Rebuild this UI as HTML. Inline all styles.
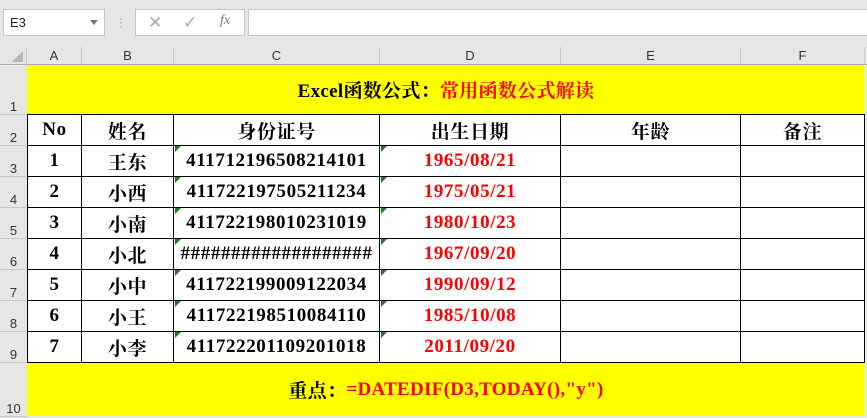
<!DOCTYPE html>
<html><head><meta charset="utf-8"><style>
*{margin:0;padding:0;box-sizing:border-box}
body{width:867px;height:418px;overflow:hidden;background:#e6e6e6;position:relative;font-family:"Liberation Serif","Noto Serif CJK SC",serif}
.a{position:absolute}
.box{background:#fff;border:1px solid #c6c6c6}
.ch{font-family:"Liberation Sans",sans-serif;font-size:13px;color:#333;text-align:center;line-height:18px;top:47px;height:18px;border-right:1px solid #c8c8c8}
.rh{font-family:"Liberation Sans",sans-serif;font-size:13px;color:#333;left:0;width:27px;text-align:center;border-bottom:1px solid #c8c8c8;display:flex;align-items:flex-end;justify-content:center;padding-bottom:0}
.c{display:flex;align-items:center;justify-content:center;font-weight:bold;font-size:19px;color:#000;background:#fff;border-right:1px solid #000;border-bottom:1px solid #000;letter-spacing:0.6px}
.r{color:#f00}
.tri{position:absolute;left:1px;top:0;width:0;height:0;border-top:6px solid #1e7b1e;border-right:6px solid transparent}
</style></head><body>
<div class="a box" style="left:3px;top:9px;width:102px;height:27px;font-family:'Liberation Sans',sans-serif;font-size:13px;line-height:25px;padding-left:6px;color:#222">E3</div>
<div class="a" style="left:90px;top:20px;border-top:5px solid #777;border-left:4px solid transparent;border-right:4px solid transparent"></div>
<div class="a" style="left:119px;top:16px;color:#999;font-size:12px;line-height:4px;font-family:'Liberation Sans',sans-serif">·<br>·<br>·</div>
<div class="a box" style="left:135px;top:9px;width:110px;height:27px;color:#aaa;font-family:'Liberation Sans',sans-serif">
<span class="a" style="left:12px;top:3px;font-size:17px">✕</span>
<span class="a" style="left:47px;top:3px;font-size:17px">✓</span>
<span class="a" style="left:84px;top:3px;font-size:14px;font-style:italic;font-family:'Liberation Serif',serif;color:#777">fx</span></div>
<div class="a box" style="left:248px;top:9px;width:625px;height:27px"></div>
<div class="a" style="left:0;top:47px;width:27px;height:18px;border-right:1px solid #c8c8c8"></div>
<div class="a" style="left:12px;top:51px;border-bottom:11px solid #b5b5b5;border-left:11px solid transparent"></div>
<div class="a ch" style="left:27px;width:55px">A</div>
<div class="a ch" style="left:82px;width:92px">B</div>
<div class="a ch" style="left:174px;width:206px">C</div>
<div class="a ch" style="left:380px;width:181px">D</div>
<div class="a ch" style="left:561px;width:180px">E</div>
<div class="a ch" style="left:741px;width:124px">F</div>
<div class="a" style="left:0;top:64px;width:867px;height:1px;background:#ababab"></div>
<div class="a rh" style="top:65px;height:50px">1</div>
<div class="a rh" style="top:115px;height:31px">2</div>
<div class="a rh" style="top:146px;height:31px">3</div>
<div class="a rh" style="top:177px;height:31px">4</div>
<div class="a rh" style="top:208px;height:31px">5</div>
<div class="a rh" style="top:239px;height:31px">6</div>
<div class="a rh" style="top:270px;height:31px">7</div>
<div class="a rh" style="top:301px;height:31px">8</div>
<div class="a rh" style="top:332px;height:31px">9</div>
<div class="a rh" style="top:363px;height:54px">10</div>
<div class="a" style="left:27px;top:65px;width:838px;height:50px;background:#ff0;border-bottom:1px solid #000;display:flex;align-items:center;justify-content:center;font-weight:bold;font-size:19px;letter-spacing:0.3px">Excel函数公式：<span class="r">常用函数公式解读</span></div>
<div class="a" style="left:27px;top:363px;width:838px;height:53px;background:#ff0;display:flex;align-items:center;justify-content:center;font-weight:bold;font-size:19px;letter-spacing:0.3px">重点：<span class="r">=DATEDIF(D3,TODAY(),"y")</span></div>
<div id="g"></div>
<script>
var cols=[[27,55],[82,92],[174,206],[380,181],[561,180],[741,124]];
var rows=[["No","姓名","身份证号","出生日期","年龄","备注"],
["1","王东","411712196508214101","1965/08/21","",""],
["2","小西","411722197505211234","1975/05/21","",""],
["3","小南","411722198010231019","1980/10/23","",""],
["4","小北","###################","1967/09/20","",""],
["5","小中","411722199009122034","1990/09/12","",""],
["6","小王","411722198510084110","1985/10/08","",""],
["7","小李","411722201109201018","2011/09/20","",""]];
var h="";
rows.forEach(function(r,i){var t=115+i*31;
cols.forEach(function(c,j){var s=(j==3&&i>0)?' r':'';var x=(i>0&&(j==2||j==3))?'<span class="tri"></span>':'';
h+='<div class="a c'+s+'" style="left:'+c[0]+'px;top:'+t+'px;width:'+c[1]+'px;height:31px'+(j==0?';border-left:1px solid #000':'')+'">'+x+r[j]+'</div>';});});
document.getElementById('g').innerHTML=h;
</script>
</body></html>
